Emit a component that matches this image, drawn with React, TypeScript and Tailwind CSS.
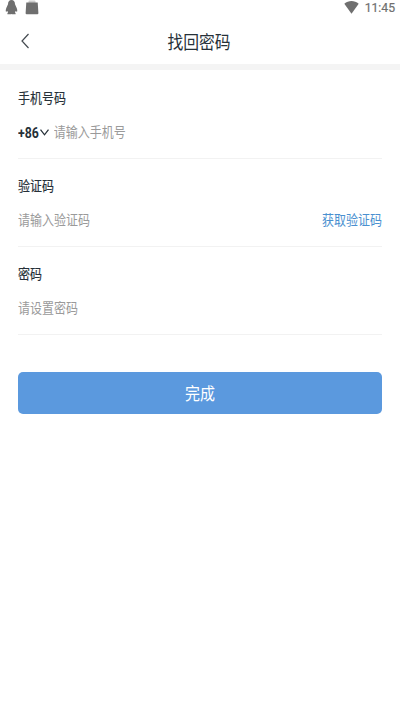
import type { ReactNode } from "react";

export default function App() {
  return (
    <div className="flex h-[710px] w-[400px] flex-col overflow-hidden bg-white font-['Roboto','Noto_Sans_CJK_SC',sans-serif] text-[#263038]">
      <StatusBar />

      <header className="grid h-[49px] shrink-0 grid-cols-[60px_1fr_62px] items-center pt-[3px]">
        <button aria-label="返回" className="pl-5">
          <svg viewBox="0 0 10 16" className="h-4 w-2.5" fill="none" stroke="#444a50" strokeWidth="1.2">
            <path d="M8.5 1 2 8l6.5 7" />
          </svg>
        </button>
        <h1 className="mt-[3px] origin-center scale-y-[1.14] text-center text-[15.8px] leading-6">
          找回密码
        </h1>
      </header>

      <div className="h-1.5 shrink-0 bg-[#f4f4f4]" />

      <main className="px-[18px] pt-px">
        <Field label="手机号码" placeholder="请输入手机号">
          <button className="mr-[5px] flex shrink-0 items-center gap-px">
            <span className="mt-px scale-y-[1.14] text-[12.3px] font-bold leading-5">+86</span>
            <svg viewBox="0 0 9 7" className="h-[7px] w-[9px]" fill="none" stroke="#263038" strokeWidth="1.3">
              <path d="M.5.7 4.5 5.8 8.5.7" />
            </svg>
          </button>
        </Field>
        <Field
          label="验证码"
          placeholder="请输入验证码"
          action={
            <button className="shrink-0 scale-y-[1.16] text-[12px] leading-5 text-[#4a90d0]">
              获取验证码
            </button>
          }
        />
        <Field label="密码" placeholder="请设置密码" />

        <button className="mt-[37px] flex h-[42px] w-full items-center justify-center rounded-[5px] bg-[#5b99de] text-white">
          <span className="mt-0.5 scale-y-[1.16] text-[15px] leading-6">完成</span>
        </button>
      </main>
    </div>
  );
}

function StatusBar() {
  return (
    <div className="flex h-[15px] shrink-0 justify-between pl-[5px] pr-[5px] text-[#6f6f6f]">
      <div className="flex gap-[7px]">
        <svg viewBox="0 0 13 15" className="h-[15px] w-[13px]" fill="currentColor">
          <path d="M6.5 0C4.2 0 3 1.8 3 4.2L1.3 8C.5 10 .6 11.8 1.2 11.8L2.4 11 3 12.4 2.4 13.2V14.3H6L6.5 13.9 7 14.3H10.6V13.2L10 12.4 10.6 11 11.8 11.8C12.4 11.8 12.5 10 11.7 8L10 4.2C10 1.8 8.8 0 6.5 0Z" />
        </svg>
        <svg viewBox="0 0 14 15" className="h-[15px] w-3.5" fill="currentColor">
          <path d="M1.3 2.5H12.7L13.4 13.2Q13.4 14.2 12.4 14.2H1.6Q.6 14.2.6 13.2Z" />
          <path d="M3.5 3V1.5Q3.5 .5 4.5 .5H9.5Q10.5 .5 10.5 1.5V3" fillOpacity=".35" />
        </svg>
      </div>
      <div className="flex items-start gap-[6px]">
        <svg viewBox="0 0 15 13" className="mt-px h-[13px] w-[15px]" fill="currentColor">
          <path d="M.3 2.8C4.5-.8 10.5-.8 14.7 2.8L7.5 12.8Z" />
        </svg>
        <span className="mt-px scale-y-[1.12] text-[12.2px] leading-[15px] [-webkit-text-stroke:0.2px]">11:45</span>
      </div>
    </div>
  );
}

function Field({
  label,
  placeholder,
  action,
  children,
}: {
  label: string;
  placeholder: string;
  action?: ReactNode;
  children?: ReactNode;
}) {
  return (
    <div className="h-[88px] border-b border-[#f2f2f2] pt-[17px]">
      <label className="block origin-center scale-y-[1.16] text-[12px] leading-5 [-webkit-text-stroke:0.15px]">
        {label}
      </label>
      <div className="mt-3.5 flex h-5 items-center">
        {children}
        <input
          aria-label={label}
          placeholder={placeholder}
          className="h-5 min-w-0 flex-1 scale-y-[1.16] text-[12px] leading-5 outline-none placeholder:text-[#9a9a9a]"
        />
        {action}
      </div>
    </div>
  );
}
